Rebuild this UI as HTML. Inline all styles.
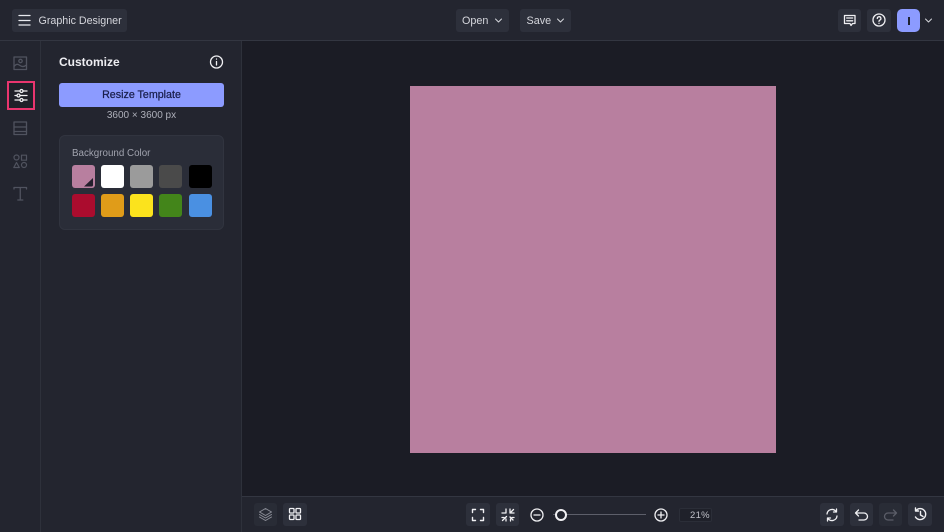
<!DOCTYPE html>
<html><head><meta charset="utf-8">
<style>
*{box-sizing:border-box}
html,body{margin:0;padding:0}
body{width:944px;height:532px;overflow:hidden;background:#23252f;font-family:"Liberation Sans",sans-serif;position:relative}
.a{position:absolute}
.btn{position:absolute;background:#2d303b;border-radius:3px}
.t{position:absolute;white-space:nowrap;color:#d5d6dc;font-size:11px;line-height:14px}
svg{position:absolute;fill:none;stroke-linecap:round;stroke-linejoin:round}
.sw{position:absolute;width:23px;height:23px;border-radius:3px}
</style></head><body>
<div class="a" style="left:242px;top:41px;width:702px;height:456px;background:#1b1c25"></div>
<div class="a" style="left:0;top:40px;width:944px;height:1px;background:#333641"></div>
<div class="a" style="left:40px;top:41px;width:1px;height:491px;background:#2e313b"></div>
<div class="a" style="left:241px;top:41px;width:1px;height:491px;background:#2e313b"></div>
<div class="a" style="left:242px;top:496px;width:702px;height:1px;background:#333641"></div>
<div class="a" style="left:410px;top:86px;width:366px;height:367px;background:#b87f9f"></div>

<div class="btn" style="left:12px;top:9px;width:115px;height:23px"></div>
<svg style="left:18px;top:14px" width="13" height="13" stroke="#e8e9ee" stroke-width="1.300"><path d="M1 1.500h11M1 6.500h11M1 11h11"/></svg>
<div class="t" style="left:38.500px;top:13.500px;font-size:10.700px">Graphic Designer</div>

<div class="btn" style="left:456px;top:9px;width:53px;height:23px"></div>
<div class="t" style="left:462px;top:13.500px;font-size:10.800px">Open</div>
<svg style="left:494px;top:17px" width="9" height="7" stroke="#d5d6dc" stroke-width="1"><path d="M1.500 2 4.500 5 7.500 2"/></svg>
<div class="btn" style="left:520px;top:9px;width:51px;height:23px"></div>
<div class="t" style="left:526.500px;top:13.500px;font-size:10.800px">Save</div>
<svg style="left:556px;top:17px" width="9" height="7" stroke="#d5d6dc" stroke-width="1"><path d="M1.500 2 4.500 5 7.500 2"/></svg>

<div class="btn" style="left:838px;top:9px;width:23px;height:23px"></div>
<svg style="left:843px;top:14px" width="14" height="14" stroke="#f0f0f3" stroke-width="1.300"><path d="M1.500 1.500h10.500v8h-2.500l-1.500 2-1-2h-5.500zM3.700 4h6M3.700 6.800h6"/></svg>
<div class="btn" style="left:867px;top:9px;width:24px;height:23px"></div>
<svg style="left:872px;top:13px" width="14" height="14" stroke="#f0f0f3" stroke-width="1.300"><circle cx="7" cy="7" r="6"/><path d="M5.300 5.500a1.800 1.800 0 1 1 2.600 1.600c-.6.300-.9.700-.9 1.300M7 10.300v.1"/></svg>
<div class="a" style="left:897px;top:9px;width:23px;height:23px;background:#8c9bff;border-radius:5px"></div>
<div class="a" style="left:908px;top:17px;width:1.500px;height:8px;background:#1f2333"></div>
<svg style="left:924px;top:17px" width="9" height="7" stroke="#d5d6dc" stroke-width="1"><path d="M1.500 2 4.500 5 7.500 2"/></svg>

<svg style="left:13px;top:56px" width="15" height="15" stroke="#50535f" stroke-width="1.300"><rect x="1" y="1" width="12.500" height="12.500"/><circle cx="7.500" cy="5" r="1.700"/><path d="M1 10.500c2.500-3 4-2.500 6-1s4 1.500 6.500-.5"/></svg>
<div class="a" style="left:7px;top:81px;width:28px;height:29px;border:2.500px solid #e9356f;background:#1f2029"></div>
<svg style="left:14px;top:88px" width="14" height="15" stroke="#f0f0f3" stroke-width="1.300"><path d="M1 3h5M9 3h4M1 7.500h2M6 7.500h7M1 12h5M9 12h4"/><circle cx="7.500" cy="3" r="1.500"/><circle cx="4.500" cy="7.500" r="1.500"/><circle cx="7.500" cy="12" r="1.500"/></svg>
<svg style="left:13px;top:121px" width="15" height="15" stroke="#50535f" stroke-width="1.300"><rect x="1" y="1" width="12.500" height="12.500"/><path d="M1 6h12.500M1 10.500h12.500"/></svg>
<svg style="left:13px;top:154px" width="15" height="15" stroke="#50535f" stroke-width="1.200"><circle cx="3.500" cy="3.500" r="2.500"/><rect x="8.500" y="1.200" width="5" height="5"/><path d="M3.500 8.500 6.300 13.500H.8z"/><circle cx="11" cy="11" r="2.500"/></svg>
<svg style="left:13px;top:186px" width="15" height="16" stroke="#50535f" stroke-width="1.300"><path d="M1 3V1.500h12.500V3M7.250 1.500V14M4.800 14h5"/></svg>

<div class="t" style="left:59px;top:55px;font-size:12px;font-weight:bold;color:#eeeef2">Customize</div>
<svg style="left:209px;top:55px" width="15" height="15" stroke="#f0f0f3" stroke-width="1.300"><circle cx="7.500" cy="7" r="6"/><path d="M7.500 6.500v3.500M7.500 4v.1"/></svg>
<div class="a" style="left:59px;top:83px;width:165px;height:24px;background:#8c9bff;border-radius:3px"></div>
<div class="t" style="left:59px;width:170px;text-align:center;top:88px;font-size:10.700px;color:#1a1f4c;-webkit-text-stroke:.25px #1a1f4c;padding-right:5px">Resize Template</div>
<div class="t" style="left:59px;width:165px;text-align:center;top:109px;font-size:10px;color:#aeb0ba">3600 × 3600 px</div>
<div class="a" style="left:59px;top:135px;width:165px;height:95px;background:#2a2d38;border:1px solid #31343f;border-radius:6px"></div>
<div class="t" style="left:72px;top:147px;font-size:9.800px;color:#a1a3ae">Background Color</div>

<div class="sw" style="left:72px;top:165px;background:#b87f9f"></div>
<svg style="left:84px;top:177px" width="11" height="11"><path d="M0 9.500 9 1V8Q9 9.500 7.500 9.500z" style="fill:#241f2c"/></svg>
<div class="sw" style="left:101px;top:165px;background:#fff"></div>
<div class="sw" style="left:130px;top:165px;background:#9b9b9b"></div>
<div class="sw" style="left:159px;top:165px;background:#4a4a4a"></div>
<div class="sw" style="left:189px;top:165px;background:#000"></div>
<div class="sw" style="left:72px;top:194px;background:#ab0c2e"></div>
<div class="sw" style="left:101px;top:194px;background:#e09c19"></div>
<div class="sw" style="left:130px;top:194px;background:#fbe31d"></div>
<div class="sw" style="left:159px;top:194px;background:#43851a"></div>
<div class="sw" style="left:189px;top:194px;background:#4a90e2"></div>

<div class="btn" style="left:254px;top:503px;width:23px;height:23px;background:#292c36"></div>
<svg style="left:258px;top:507px" width="15" height="15" stroke="#8c8e98" stroke-width="1"><path d="M7.500 1.500 13.500 5l-6 3.500L1.500 5zM1.500 7.500l6 3.500 6-3.500M1.500 10l6 3.500 6-3.500"/></svg>
<div class="btn" style="left:283px;top:503px;width:24px;height:23px"></div>
<svg style="left:288px;top:507px" width="14" height="14" stroke="#f0f0f3" stroke-width="1.300"><rect x="1.500" y="1.500" width="4.500" height="4.500" rx=".7"/><rect x="8" y="1.500" width="4.500" height="4.500" rx=".7"/><rect x="1.500" y="8" width="4.500" height="4.500" rx=".7"/><rect x="8" y="8" width="4.500" height="4.500" rx=".7"/></svg>

<div class="btn" style="left:466px;top:503px;width:24px;height:23px"></div>
<svg style="left:471px;top:508px" width="14" height="14" stroke="#f0f0f3" stroke-width="1.400"><path d="M1.500 4.500v-3h3M9.500 1.500h3v3M12.500 9.500v3h-3M4.500 12.500h-3v-3"/></svg>
<div class="btn" style="left:496px;top:503px;width:23px;height:23px"></div>
<svg style="left:501px;top:508px" width="14" height="14" stroke="#f0f0f3" stroke-width="1.300"><path d="M1 5h4V1M1 9.500h2M5 13V11M9 1v4h4M13 9.500h-2M9.500 13v-2M9 5l3.500-3.500M5.500 8.500l-4 4M9 9l3 3"/></svg>
<svg style="left:530px;top:508px" width="14" height="14" stroke="#f0f0f3" stroke-width="1.300"><circle cx="7" cy="7" r="6"/><path d="M4 7h6"/></svg>
<div class="a" style="left:553px;top:514px;width:93px;height:1px;background:#5d5f6a"></div>
<div class="a" style="left:555px;top:509px;width:12px;height:12px;border:2px solid #f0f0f3;border-radius:50%;background:#23252f"></div>
<svg style="left:654px;top:508px" width="14" height="14" stroke="#f0f0f3" stroke-width="1.300"><circle cx="7" cy="7" r="6"/><path d="M4 7h6M7 4v6"/></svg>
<div class="a" style="left:679px;top:508px;width:33px;height:14px;background:#1f212a;border-radius:2px;border:1px solid #2b2e38"></div>
<div class="t" style="left:690px;top:508.500px;font-size:9.500px;color:#bfc0c8;letter-spacing:.3px">21%</div>

<div class="btn" style="left:820px;top:503px;width:24px;height:23px"></div>
<svg style="left:825px;top:508px" width="14" height="14" stroke="#f0f0f3" stroke-width="1.300"><path d="M2 6a5 5 0 0 1 9-2.500M12 8a5 5 0 0 1-9 2.500M11.500 1v3h-3M2.500 13v-3h3"/></svg>
<div class="btn" style="left:850px;top:503px;width:23px;height:23px"></div>
<svg style="left:854px;top:508px" width="15" height="14" stroke="#f0f0f3" stroke-width="1.300"><path d="M1.500 5h8.500a3 3 0 0 1 0 7H5M4.500 2 1.500 5l3 3"/></svg>
<div class="btn" style="left:879px;top:503px;width:23px;height:23px;background:#292c36"></div>
<svg style="left:883px;top:508px" width="15" height="14" stroke="#5b5d68" stroke-width="1.300"><path d="M13.500 5H5a3 3 0 0 0 0 7h5M10.500 2l3 3-3 3"/></svg>
<div class="btn" style="left:908px;top:503px;width:24px;height:23px"></div>
<svg style="left:913px;top:507px" width="15" height="15" stroke="#f0f0f3" stroke-width="1.400"><path d="M3 3.500A5.500 5.500 0 1 1 2.500 10M2.500 1v3h3M7.500 4.500V8l2.500 1.500"/></svg>
</body></html>
